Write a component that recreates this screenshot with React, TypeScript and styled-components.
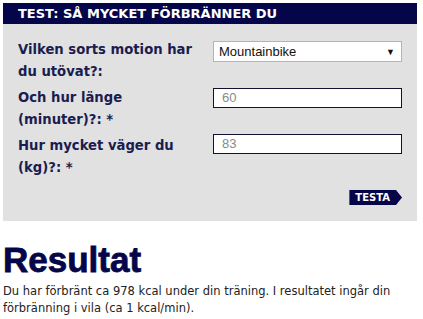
import type { FC } from "react";
import styled, { createGlobalStyle } from "styled-components";

const GlobalStyle = createGlobalStyle`
  body {
    margin: 0;
    background: #ffffff;
    font-family: "DejaVu Sans", Verdana, sans-serif;
  }
`;

const Page = styled.div`
  padding: 3px 6px 0 3px;
`;

const Box = styled.section`
  background: #e1e1e1;
`;

const Header = styled.h3`
  margin: 0;
  height: 21px;
  padding: 0 15px;
  background: #05064a;
  color: #ffffff;
  font-size: 13px;
  font-weight: bold;
  line-height: 21px;
`;

const Form = styled.form`
  display: flex;
  flex-direction: column;
  padding: 15px 15px 16px 15px;
`;

const Row = styled.div`
  display: grid;
  grid-template-columns: 195px 189px;
  align-items: start;
  height: 48px;
  &:last-of-type {
    height: 44px;
  }
`;

const Label = styled.label`
  max-width: 182px;
  color: #1b1c4f;
  font-size: 13.2px;
  font-weight: bold;
  line-height: 22px;
`;

const Select = styled.div`
  display: flex;
  align-items: center;
  justify-content: space-between;
  box-sizing: border-box;
  height: 21px;
  margin-top: 2px;
  padding: 0 6px 0 5px;
  background: #ffffff;
  border: 1px solid #b4b4b4;
  color: #111111;
  font-family: "Liberation Sans", Arial, sans-serif;
  font-size: 13px;
`;

const Caret = styled.span`
  font-size: 9px;
  color: #111;
`;

const Input = styled.div`
  box-sizing: border-box;
  height: 20px;
  margin-top: ${(p: { $top: number }) => p.$top}px;
  padding: 0 8px;
  background: #ffffff;
  border: 1px solid #111133;
  color: #8a8a8a;
  font-family: "Liberation Sans", Arial, sans-serif;
  font-size: 13px;
  line-height: 18px;
`;

const Actions = styled.div`
  display: flex;
  justify-content: flex-end;
  padding-top: 7px;
`;

const Testa = styled.button`
  height: 15px;
  padding: 0 12px 0 6px;
  border: 0;
  background: #05064a;
  color: #ffffff;
  font-family: "DejaVu Sans", Verdana, sans-serif;
  font-size: 10px;
  font-weight: bold;
  line-height: 15px;
  clip-path: polygon(0 0, calc(100% - 6px) 0, 100% 50%, calc(100% - 6px) 100%, 0 100%);
`;

const Title = styled.h1`
  margin: 19px 0 0 0;
  color: #05064a;
  font-family: "Liberation Sans", Arial, sans-serif;
  font-size: 35px;
  font-weight: 900;
  -webkit-text-stroke: 0.8px #05064a;
  line-height: 40px;
`;

const Text = styled.p`
  margin: 3px 0 0 0;
  color: #222222;
  font-size: 11.5px;
  line-height: 17px;
`;

const App: FC = () => {
  return (
    <Page>
      <GlobalStyle />
      <Box>
        <Header>TEST: SÅ MYCKET FÖRBRÄNNER DU</Header>
        <Form>
          <Row>
            <Label>Vilken sorts motion har du utövat?:</Label>
            <Select>
              <span>Mountainbike</span>
              <Caret>▼</Caret>
            </Select>
          </Row>
          <Row>
            <Label>Och hur länge (minuter)?: *</Label>
            <Input $top={1}>60</Input>
          </Row>
          <Row>
            <Label>Hur mycket väger du (kg)?: *</Label>
            <Input $top={-1}>83</Input>
          </Row>
          <Actions>
            <Testa type="button">TESTA</Testa>
          </Actions>
        </Form>
      </Box>
      <Title>Resultat</Title>
      <Text>
        Du har förbränt ca 978 kcal under din träning. I resultatet ingår din
        förbränning i vila (ca 1 kcal/min).
      </Text>
    </Page>
  );
};

export default App;
